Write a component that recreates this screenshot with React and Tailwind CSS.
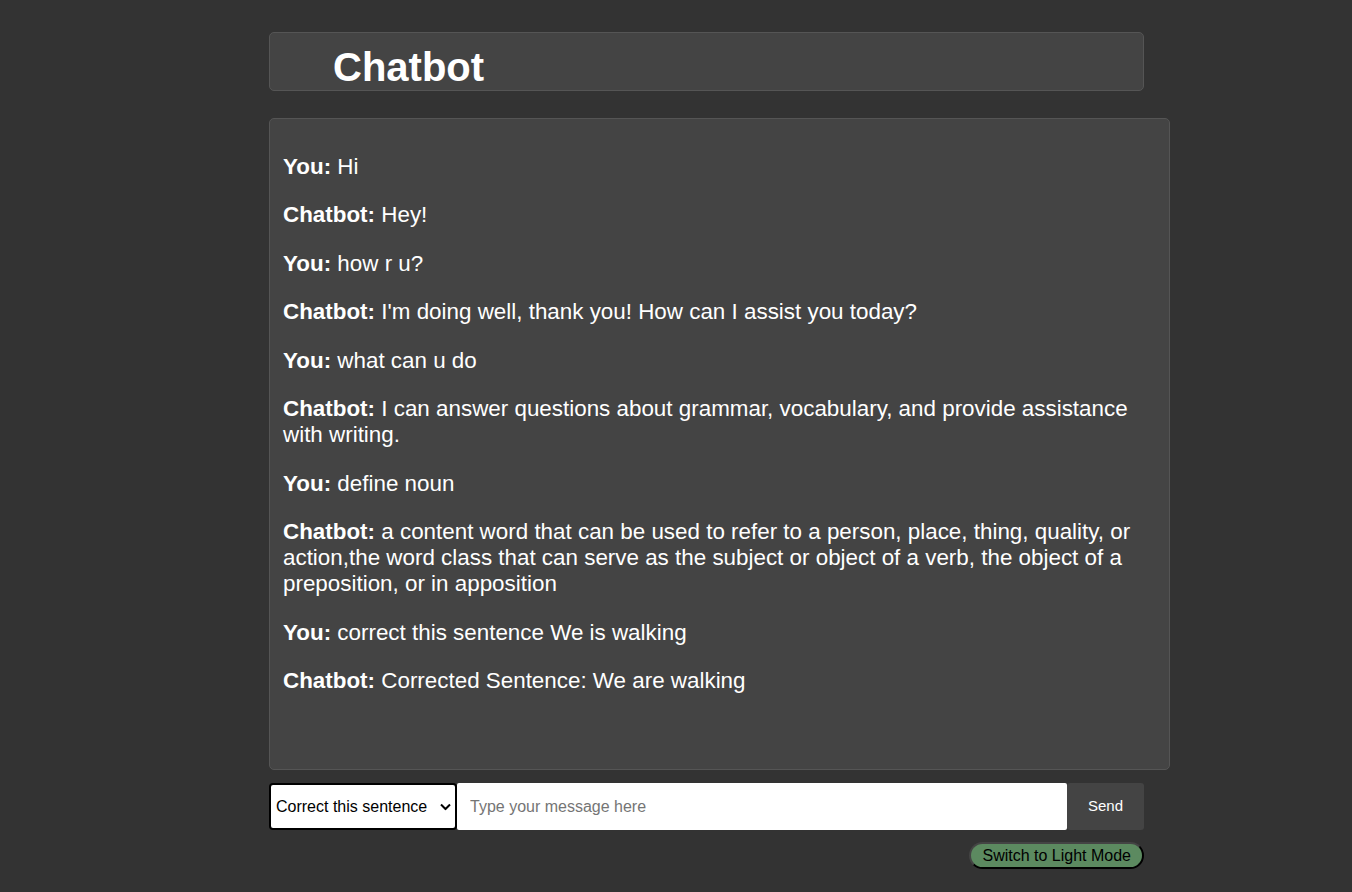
import React, { useState } from 'react';

const messages = [
    { who: 'You', text: 'Hi' },
    { who: 'Chatbot', text: 'Hey!' },
    { who: 'You', text: 'how r u?' },
    { who: 'Chatbot', text: "I'm doing well, thank you! How can I assist you today?" },
    { who: 'You', text: 'what can u do' },
    { who: 'Chatbot', text: 'I can answer questions about grammar, vocabulary, and provide assistance with writing.' },
    { who: 'You', text: 'define noun' },
    { who: 'Chatbot', text: 'a content word that can be used to refer to a person, place, thing, quality, or action,the word class that can serve as the subject or object of a verb, the object of a preposition, or in apposition' },
    { who: 'You', text: 'correct this sentence We is walking' },
    { who: 'Chatbot', text: 'Corrected Sentence: We are walking' },
];

const App = () => {
    const [mode, setMode] = useState('Correct this sentence');

    return (
        <div className="min-h-screen bg-[#333333] font-['Liberation_Sans',Arial,sans-serif] text-white">
            <div className="ml-[269px] w-[901px] pt-[32px]">
                <div className="w-[875px] h-[59px] bg-[#444444] border border-[#555555] rounded-[5px] flex items-center pl-[63px]">
                    <h1 className="text-[40px] font-bold leading-none mt-[10px]">Chatbot</h1>
                </div>

                <div className="mt-[27px] h-[652px] bg-[#444444] border border-[#555555] rounded-[5px] px-[13px] pt-[12px]">
                    {messages.map((m, i) => (
                        <p key={i} className="text-[22.4px] leading-[26px] mt-[22.5px]">
                            <b>{m.who}:</b> {m.text}
                        </p>
                    ))}
                </div>

                <div className="mt-[13px] w-[875px] h-[47px] flex">
                    <div className="relative w-[188px] h-full">
                        <select
                            value={mode}
                            onChange={(e) => setMode(e.target.value)}
                            className="w-full h-full bg-white text-black text-[16px] border-2 border-black rounded-[4px] pl-[5px] pr-[20px] appearance-none outline-none"
                        >
                            <option>Correct this sentence</option>
                            <option>Define word</option>
                            <option>General</option>
                        </select>
                        <svg
                            className="absolute right-[6px] top-1/2 -translate-y-1/2 pointer-events-none"
                            width="11"
                            height="7"
                            viewBox="0 0 11 7"
                        >
                            <path d="M1 1l4.5 4.5L10 1" fill="none" stroke="#000" strokeWidth="2" />
                        </svg>
                    </div>
                    <input
                        type="text"
                        placeholder="Type your message here"
                        className="flex-1 h-full bg-white text-black text-[16px] pl-[13px] outline-none placeholder:text-[#757575] rounded-[2px]"
                    />
                    <button className="w-[77px] h-full bg-[#444444] text-white text-[15px] rounded-[3px]">
                        Send
                    </button>
                </div>

                <div className="w-[875px] flex justify-end mt-[12px]">
                    <button className="h-[27px] px-[11px] bg-[#5c8a60] text-black text-[16px] rounded-full border-2 border-black border-t-[#444444] border-l-[#444444]">
                        Switch to Light Mode
                    </button>
                </div>
            </div>
        </div>
    );
};

export default App;
